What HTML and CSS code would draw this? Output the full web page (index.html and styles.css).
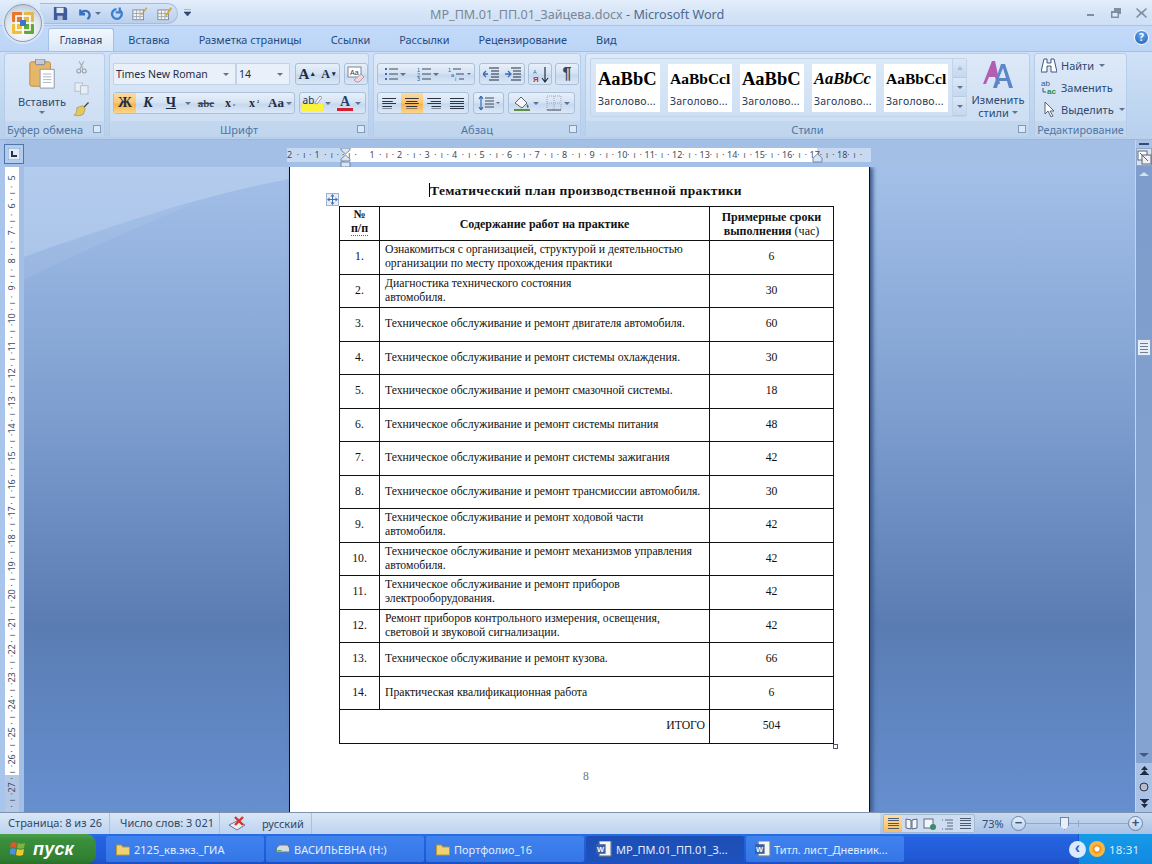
FILE: index.html
```html
<!DOCTYPE html>
<html lang="ru">
<head>
<meta charset="utf-8">
<title>Microsoft Word</title>
<link rel="stylesheet" href="styles.css">
</head>
<body>
<div class="app">
  <header class="titlebar">
    <div class="office-btn">
      <svg width="24" height="24" viewBox="0 0 24 24"><rect x="1" y="1" width="10" height="10" rx="1" fill="#e8762c"/><rect x="13" y="1" width="10" height="10" rx="1" fill="#e4b23a" opacity=".9"/><rect x="1" y="13" width="10" height="10" rx="1" fill="#f2c038"/><rect x="13" y="13" width="10" height="10" rx="1" fill="#5fa83c"/><rect x="5" y="5" width="14" height="14" fill="none" stroke="#fff" stroke-width="1.6"/><rect x="9" y="9" width="6" height="6" fill="#3b78c4"/></svg>
    </div>
    <div class="qat">
      <svg width="15" height="15" viewBox="0 0 17 17"><path d="M1 1h13l2 2v13H1z" fill="#3f5a9a"/><rect x="4" y="2" width="8" height="6" fill="#dfe8f6"/><rect x="5" y="11" width="6" height="5" fill="#a9bcdc"/></svg>
      <svg class="g8" width="14" height="13" viewBox="0 0 18 16"><path d="M3 3v6h6M3 9c3-6 11-6 12 1 0 2-1 4-3 5" fill="none" stroke="#3a6fc0" stroke-width="3"/></svg>
      <i class="arr"></i>
      <svg class="gap" width="13" height="14" viewBox="0 0 16 16"><path d="M13 4a6 6 0 1 1-5-2M12 0v6H7" fill="none" stroke="#3a7fd0" stroke-width="2.8"/></svg>
      <svg class="gap" width="16" height="15" viewBox="0 0 18 16"><rect x="1" y="4" width="12" height="11" fill="#f5f5ef" stroke="#7d8694"/><path d="M1 8h12M1 11.500h12M5 4v11M9 4v11" stroke="#9aa5b5"/><path d="M10 9 16 1l1 1-6 8z" fill="#c99a4a"/></svg>
      <svg class="gap" width="16" height="15" viewBox="0 0 18 16"><rect x="1" y="4" width="12" height="11" fill="#f5f5ef" stroke="#7d8694"/><path d="M1 8h12M1 11.500h12M5 4v11M9 4v11" stroke="#9aa5b5"/><path d="M9 10 15 1l2 1-6 9z" fill="#d8a844"/></svg>
    </div>
    <div class="qat-more">
      <svg width="7" height="8" viewBox="0 0 7 8"><path d="M0 0h7M0 3h7l-3.500 4z" fill="#33466b" stroke="#33466b" stroke-width=".6"/></svg>
    </div>
    <h1 class="doc-title">МР_ПМ.01_ПП.01_Зайцева.docx<span class="dash"> - </span><span class="appname">Microsoft Word</span></h1>
    <div class="winctl">
      <svg width="10" height="10" viewBox="0 0 10 10"><rect x="1" y="6" width="7" height="2" fill="#7f8ea3"/></svg>
      <svg width="10" height="10" viewBox="0 0 10 10"><path d="M3 0h7v6H8V3H3zM0 3h8v7H0z" fill="#7f8ea3"/><rect x="1.500" y="5" width="5" height="3.500" fill="#dde9f7"/></svg>
      <svg width="11" height="10" viewBox="0 0 11 10"><path d="M1 0 5.500 4 10 0l1 1-4 4 4 4-1 1-4.500-4L1 10 0 9l4-4-4-4z" fill="#7f8ea3"/></svg>
    </div>
  </header>

  <nav class="tabs">
    <span class="tab active">Главная</span>
    <span class="tab">Вставка</span>
    <span class="tab">Разметка страницы</span>
    <span class="tab">Ссылки</span>
    <span class="tab">Рассылки</span>
    <span class="tab">Рецензирование</span>
    <span class="tab">Вид</span>
    <span class="help">?</span>
  </nav>

  <section class="ribbon">
    <div class="group g-clip">
      <div class="g-body clip-body">
        <div class="paste">
          <svg width="28" height="30" viewBox="0 0 28 32"><rect x="1" y="3" width="22" height="26" rx="2" fill="#e6b66a" stroke="#b98a45"/><rect x="7" y="0" width="10" height="6" rx="1" fill="#c7ccd4" stroke="#7d8694"/><path d="M12 11h15v20H12z" fill="#fff" stroke="#8b95a3"/><path d="M15 16h9M15 19h9M15 22h9M15 25h9" stroke="#a9b2bf"/></svg>
          <span>Вставить</span>
          <i class="arr"></i>
        </div>
        <div class="clip-tools">
          <svg width="11" height="15" viewBox="0 0 14 16"><path d="M4 0l5 10M10 0 5 10" stroke="#a3abb5" stroke-width="1.400"/><circle cx="3.500" cy="12.500" r="2.500" fill="none" stroke="#98a1ac" stroke-width="1.400"/><circle cx="10.500" cy="12.500" r="2.500" fill="none" stroke="#98a1ac" stroke-width="1.400"/></svg>
          <svg width="15" height="13" viewBox="0 0 16 14"><rect x="1" y="1" width="8" height="9" fill="#e9eef5" stroke="#b3bccb"/><rect x="7" y="4" width="8" height="9" fill="#e9eef5" stroke="#b3bccb"/></svg>
          <svg width="15" height="15" viewBox="0 0 16 16"><path d="M10 5 15 0l1 1-5 5z" fill="#4a4a40"/><path d="M3 6 9 4l3 3-2 6c-3 2-8 2-10 1 3-2 3-4 3-8z" fill="#e3c860" stroke="#9b8335" stroke-width=".6"/></svg>
        </div>
      </div>
      <div class="g-label left">Буфер обмена<i class="launch"></i></div>
    </div>

    <div class="group g-font">
      <div class="g-body rows">
        <div class="row">
          <div class="combo c-font">Times New Roman<i class="arr"></i></div>
          <div class="combo c-size">14<i class="arr"></i></div>
          <div class="bgroup m5">
            <b class="btn w22 serif big">A<sup>▴</sup></b>
            <b class="btn w21 serif mid">A<sup>▾</sup></b>
          </div>
          <div class="bgroup m4">
            <span class="btn w22"><svg width="18" height="17" viewBox="0 0 18 17"><rect x="1" y="1" width="13" height="10" fill="#fff" stroke="#7d8694"/><text x="3" y="9" class="mini">Aa</text><path d="M7 14l7-6 3 3-5 5H9z" fill="#f0d6d8" stroke="#a8808a" stroke-width=".7"/></svg></span>
          </div>
        </div>
        <div class="row">
          <div class="bgroup">
            <b class="btn w22 on serif fs">Ж</b>
            <b class="btn w24 serif fs"><em>К</em></b>
            <b class="btn w22 serif fs"><u>Ч</u></b>
            <span class="btn w12"><i class="arr"></i></span>
            <span class="btn w24 serif strike">abc</span>
            <b class="btn w24 serif">x<sub>₂</sub></b>
            <b class="btn w24 serif">x<sup>²</sup></b>
            <span class="btn w28 serif aa"><b>Aa</b><i class="arr"></i></span>
          </div>
          <div class="bgroup m4">
            <span class="btn w33 hl"><span class="hl-t">ab<svg width="8" height="10" viewBox="0 0 11 13"><path d="M1 11 8 1l3 2-7 9z" fill="#fff" stroke="#6f7885"/></svg></span><i class="arr"></i></span>
            <span class="btn w32 fc"><b class="serif">A</b><i class="arr"></i></span>
          </div>
        </div>
      </div>
      <div class="g-label">Шрифт<i class="launch"></i></div>
    </div>

    <div class="group g-para">
      <div class="g-body rows">
        <div class="row">
          <div class="bgroup">
            <span class="btn w33"><svg width="14" height="14" viewBox="0 0 14 14"><path d="M5 2h9M5 7h9M5 12h9" stroke="#3d4a5c"/><path d="M1 1h2v2H1zM1 6h2v2H1zM1 11h2v2H1z" fill="#3b6cb0"/></svg><i class="arr"></i></span>
            <span class="btn w33"><svg width="14" height="14" viewBox="0 0 14 14"><path d="M5 2h9M5 7h9M5 12h9" stroke="#3d4a5c"/><text x="0" y="4.500" class="mini blue">1</text><text x="0" y="9.500" class="mini blue">2</text><text x="0" y="14" class="mini blue">3</text></svg><i class="arr"></i></span>
            <span class="btn w30"><svg width="18" height="14" viewBox="0 0 18 14"><path d="M6 2h8M9 7h8M12 12h5" stroke="#3d4a5c"/><text x="1" y="4.500" class="mini blue">1</text><text x="4" y="9.500" class="mini blue">a</text><text x="8" y="14" class="mini blue">i</text></svg><i class="arr small"></i></span>
          </div>
          <div class="bgroup m4">
            <span class="btn w22"><svg width="16" height="14" viewBox="0 0 16 14"><path d="M6 1h10M8 4h8M8 7h8M8 10h8M6 13h10" stroke="#26303f" stroke-width="1.200"/><path d="M5 7H0M3 4 0 7l3 3" fill="none" stroke="#3b6cb0" stroke-width="1.300"/></svg></span>
            <span class="btn w22"><svg width="16" height="14" viewBox="0 0 16 14"><path d="M6 1h10M8 4h8M8 7h8M8 10h8M6 13h10" stroke="#26303f" stroke-width="1.200"/><path d="M0 7h5M3 4l3 3-3 3" fill="none" stroke="#3b6cb0" stroke-width="1.300"/></svg></span>
          </div>
          <div class="bgroup m3">
            <span class="btn w22"><svg width="17" height="17" viewBox="0 0 17 17"><text x="1" y="7.500" class="mini blue">А</text><text x="1" y="16" class="mini red">Я</text><path d="M13 1v14M10 12l3 4 3-4" fill="none" stroke="#26303f" stroke-width="1.200"/></svg></span>
          </div>
          <div class="bgroup m3">
            <span class="btn w22 pil">¶</span>
          </div>
        </div>
        <div class="row">
          <div class="bgroup">
            <span class="btn w23"><i class="al al-l"></i></span>
            <span class="btn w23 on"><i class="al al-c"></i></span>
            <span class="btn w23"><i class="al al-r"></i></span>
            <span class="btn w23"><i class="al"></i></span>
          </div>
          <div class="bgroup m4">
            <span class="btn w29"><svg width="16" height="14" viewBox="0 0 16 14"><path d="M7 2h9M7 5h9M7 8h9M7 11h9" stroke="#3d4a5c"/><path d="M3 0v14M1 3l2-3 2 3M1 11l2 3 2-3" fill="none" stroke="#3b6cb0" stroke-width="1.200"/></svg><i class="arr small"></i></span>
          </div>
          <div class="bgroup m4">
            <span class="btn w33"><svg width="18" height="16" viewBox="0 0 18 16"><path d="M2 8 8 2l6 6-5 5z" fill="#f5f5f5" stroke="#5a6472"/><path d="M14 9c2 2 2 3 1 4-1 0-2-2-1-4z" fill="#3b6cb0"/><rect x="1" y="14" width="16" height="2" fill="#5e8e3e"/></svg><i class="arr"></i></span>
            <span class="btn w32"><svg width="16" height="16" viewBox="0 0 16 16"><rect x="1" y="1" width="14" height="14" fill="none" stroke="#9aa5b5" stroke-dasharray="1 1"/><path d="M8 1v14M1 8h14" stroke="#9aa5b5" stroke-dasharray="1 1"/><path d="M1 15h14" stroke="#4a5566"/></svg><i class="arr"></i></span>
          </div>
        </div>
      </div>
      <div class="g-label">Абзац<i class="launch"></i></div>
    </div>

    <div class="group g-styles">
      <div class="g-body styles-body">
        <div class="gallery">
          <div class="card"><b class="s1">AaBbC</b><span>Заголово...</span></div>
          <div class="card"><b class="s2">AaBbCcl</b><span>Заголово...</span></div>
          <div class="card"><b class="s1">AaBbC</b><span>Заголово...</span></div>
          <div class="card"><b class="s3">AaBbCc</b><span>Заголово...</span></div>
          <div class="card"><b class="s2">AaBbCcl</b><span>Заголово...</span></div>
          <div class="gal-scroll">
            <span class="off"><i class="arr up"></i></span>
            <span><i class="arr"></i></span>
            <span><i class="arr"></i></span>
          </div>
        </div>
        <div class="change">
          <svg width="31" height="29" viewBox="0 0 31 29"><path d="M0 24 9 1h3l5 23h-3l-2-7H6l-3 7z" fill="#b55db0"/><path d="M10 28 18 4h4l8 24h-4l-2-7h-8l-2 7z" fill="#5b87c8"/><path d="M16 18h7l-3-10z" fill="#dbe7f6"/></svg>
          <span>Изменить</span>
          <span>стили<i class="arr"></i></span>
        </div>
      </div>
      <div class="g-label">Стили<i class="launch"></i></div>
    </div>

    <div class="group g-edit">
      <div class="g-body edit-body">
        <div class="edit-row">
          <svg width="16" height="15" viewBox="0 0 16 15"><path d="M3 1h3v4h4V1h3l3 13h-6V8H6v6H0z" fill="#fff" stroke="#3c5780"/></svg>
          <span>Найти</span><i class="arr"></i>
        </div>
        <div class="edit-row">
          <svg width="16" height="15" viewBox="0 0 16 15"><text x="0" y="6" class="mini dark">ab</text><text x="6" y="14" class="mini green">ac</text><path d="M2 8v4h3" fill="none" stroke="#3c5780"/></svg>
          <span>Заменить</span>
        </div>
        <div class="edit-row">
          <svg width="16" height="15" viewBox="0 0 16 15"><path d="M4 0v12l3-3 3 6 2-1-3-5h4z" fill="#fff" stroke="#5a6472"/></svg>
          <span>Выделить</span><i class="arr"></i>
        </div>
      </div>
      <div class="g-label">Редактирование</div>
    </div>
  </section>

  <main class="workspace">
    <aside class="vside">
      <div class="tabstop"><svg width="12" height="12" viewBox="0 0 12 12"><rect width="12" height="12" fill="#e2ecf8" stroke="#7f9ac0"/><path d="M4 3v5h5" fill="none" stroke="#23354f" stroke-width="2"/></svg></div>
      <div class="vruler">
        <span>5</span><span>6</span><span>7</span><span>8</span><span>9</span><span>10</span><span>11</span><span>12</span><span>13</span><span>14</span><span>15</span><span>16</span><span>17</span><span>18</span><span>19</span><span>20</span><span>21</span><span>22</span><span>23</span><span>24</span><span>25</span><span>26</span><span>27</span>
      </div>
    </aside>

    <div class="center">
      <div class="hstrip">
        <div class="hruler">
          <span>2</span><span>1</span><span></span><span>1</span><span>2</span><span>3</span><span>4</span><span>5</span><span>6</span><span>7</span><span>8</span><span>9</span><span>10</span><span>11</span><span>12</span><span>13</span><span>14</span><span>15</span><span>16</span><span>17</span><span>18</span>
          <svg class="indent-l" width="11" height="19" viewBox="0 0 11 19"><path d="M1 0h9v2L5.500 6 1 2zM5.500 7 10 11v2H1v-2zM1 14h9v5H1z" fill="#d9e5f4" stroke="#5d7698" stroke-width=".8"/></svg>
          <svg class="indent-r" width="11" height="10" viewBox="0 0 11 10"><path d="M5.500 1 10 5v4H1V5z" fill="#d9e5f4" stroke="#5d7698" stroke-width=".8"/></svg>
        </div>
      </div>
      <div class="canvas">
        <article class="page">
          <i class="move"><svg width="11" height="11" viewBox="0 0 11 11"><path d="M5.500 0 7.500 2.500h-1.500v2.500h2.500V3.500L11 5.500 8.500 7.500V6H6v2.500h1.500L5.500 11 3.500 8.500H5V6H2.500v1.500L0 5.500 2.500 3.500V5H5V2.500H3.500z" fill="#3f6fb0"/></svg></i>
          <h2 class="doc-h"><span class="caret"></span>Тематический план производственной практики</h2>
          <div class="table-wrap">
          <table class="plan">
            <colgroup><col class="c1"><col class="c2"><col class="c3"></colgroup>
            <tr class="head"><th class="num">№<br><span class="squig">п/п</span></th><th>Содержание работ на практике</th><th>Примерные сроки<br>выполнения <span class="norm">(час)</span></th></tr>
            <tr><td class="n">1.</td><td>Ознакомиться с организацией, структурой и деятельностью<br>организации по месту прохождения практики</td><td class="n">6</td></tr>
            <tr><td class="n">2.</td><td>Диагностика технического состояния<br>автомобиля.</td><td class="n">30</td></tr>
            <tr><td class="n">3.</td><td>Техническое обслуживание и ремонт двигателя автомобиля.</td><td class="n">60</td></tr>
            <tr><td class="n">4.</td><td>Техническое обслуживание и ремонт системы охлаждения.</td><td class="n">30</td></tr>
            <tr><td class="n">5.</td><td>Техническое обслуживание и ремонт смазочной системы.</td><td class="n">18</td></tr>
            <tr><td class="n">6.</td><td>Техническое обслуживание и ремонт системы питания</td><td class="n">48</td></tr>
            <tr><td class="n">7.</td><td>Техническое обслуживание и ремонт системы зажигания</td><td class="n">42</td></tr>
            <tr><td class="n">8.</td><td>Техническое обслуживание и ремонт трансмиссии автомобиля.</td><td class="n">30</td></tr>
            <tr><td class="n">9.</td><td>Техническое обслуживание и ремонт ходовой части<br>автомобиля.</td><td class="n">42</td></tr>
            <tr><td class="n">10.</td><td>Техническое обслуживание и ремонт механизмов управления<br>автомобиля.</td><td class="n">42</td></tr>
            <tr><td class="n">11.</td><td>Техническое обслуживание и ремонт приборов<br>электрооборудования.</td><td class="n">42</td></tr>
            <tr><td class="n">12.</td><td>Ремонт приборов контрольного измерения, освещения,<br>световой и звуковой сигнализации.</td><td class="n">42</td></tr>
            <tr><td class="n">13.</td><td>Техническое обслуживание и ремонт кузова.</td><td class="n">66</td></tr>
            <tr><td class="n">14.</td><td>Практическая квалификационная работа</td><td class="n">6</td></tr>
            <tr><td colspan="2" class="total">ИТОГО</td><td class="n">504</td></tr>
          </table>
          <i class="resize"></i>
          </div>
          <div class="pagenum">8</div>
        </article>
      </div>
    </div>

    <aside class="vscroll">
      <i class="split"></i>
      <div class="vrbtn"><svg width="15" height="15" viewBox="0 0 15 15"><rect x="1" y="1" width="9" height="9" fill="#fff" stroke="#5a6472"/><rect x="5" y="5" width="9" height="9" fill="#eef2f8" stroke="#5a6472"/><path d="M3 3l8 8" stroke="#5a6472"/></svg></div>
      <div class="track">
        <i class="tri up"></i>
        <div class="thumb"><i></i><i></i><i></i><i></i></div>
        <i class="tri down"></i>
      </div>
      <div class="browse">
        <svg width="9" height="9" viewBox="0 0 9 9"><path d="M4.500 0 8 4H1zM4.500 4 8 8H1zM0 8h9v1H0z" fill="#1d2a40"/></svg>
        <svg width="10" height="10" viewBox="0 0 10 10"><circle cx="5" cy="5" r="4" fill="#b7bcc8" stroke="#2a3346"/></svg>
        <svg width="9" height="9" viewBox="0 0 9 9"><path d="M0 0h9v1H0zM1 1h7L4.500 5zM1 5h7L4.500 9z" fill="#1d2a40"/></svg>
      </div>
    </aside>
  </main>

  <footer class="status">
    <span class="st st-page">Страница: 8 из 26</span>
    <span class="st st-words">Число слов: 3 021</span>
    <span class="st st-lang"><svg width="18" height="16" viewBox="0 0 18 16"><path d="M1 9l8-4 8 4-8 5z" fill="#e8edf5" stroke="#6b7a90"/><path d="M7 1l8 8M15 1 7 9" stroke="#d8332c" stroke-width="2.400"/></svg>русский</span>
    <div class="st-right">
      <div class="views">
        <span class="view on"><i class="vl"></i></span>
        <span class="view"><svg width="13" height="12" viewBox="0 0 13 12"><path d="M1 1l5 1v9l-5-1zM12 1 7 2v9l5-1z" fill="#f2f5fa" stroke="#5a6a80"/></svg></span>
        <span class="view"><svg width="13" height="12" viewBox="0 0 13 12"><rect x="1" y="1" width="9" height="9" fill="#f2f5fa" stroke="#5a6a80"/><circle cx="10" cy="9" r="3" fill="#3f8a6c"/></svg></span>
        <span class="view"><svg width="13" height="12" viewBox="0 0 13 12"><path d="M4 2h8M6 5h6M6 8h6M4 11h8" stroke="#5a6a80"/><path d="M1 2h1M1 11h1" stroke="#5a6a80"/></svg></span>
        <span class="view"><i class="vl"></i></span>
      </div>
      <span class="zoom-val">73%</span>
      <span class="zbtn">−</span>
      <div class="slider"><i class="mid"></i><i class="knob"></i></div>
      <span class="zbtn">+</span>
    </div>
  </footer>

  <footer class="taskbar">
    <div class="start">
      <svg width="17" height="16" viewBox="0 0 17 16"><path d="M1 2c2-1 4-1 6 0l-1 5c-2-1-4-1-6 0z" fill="#e2562a"/><path d="M8 2c2 1 5 1 7 0l-1 5c-2 1-5 1-7 0z" fill="#7cb53c"/><path d="M0 8c2-1 4-1 6 0l-1 6c-2-1-4-1-6 0z" fill="#4d8fdc"/><path d="M7 8c2 1 5 1 7 0l-1 6c-2 1-5 1-7 0z" fill="#f2c531"/></svg>
      <em>пуск</em>
    </div>
    <div class="tb">
      <svg width="16" height="13" viewBox="0 0 15 13"><path d="M1 2h5l1 2h7v8H1z" fill="#f0d272" stroke="#b8963c"/></svg>
      <span>2125_кв.экз._ГИА</span>
    </div>
    <div class="tb">
      <svg width="16" height="13" viewBox="0 0 15 13"><path d="M1 5 4 2h8l2 3v4H1z" fill="#d6dbe2" stroke="#6f7885"/><rect x="2" y="7" width="4" height="1" fill="#39b54a"/></svg>
      <span>ВАСИЛЬЕВНА (H:)</span>
    </div>
    <div class="tb">
      <svg width="16" height="13" viewBox="0 0 15 13"><path d="M1 2h5l1 2h7v8H1z" fill="#f0d272" stroke="#b8963c"/></svg>
      <span>Портфолио_16</span>
    </div>
    <div class="tb act">
      <svg width="16" height="16" viewBox="0 0 15 15"><rect x="3" y="0" width="11" height="14" fill="#f7f7f2" stroke="#7d8694"/><rect x="0" y="3" width="9" height="9" fill="#3a5fa8"/><text x="1" y="10.500" class="mini white">W</text></svg>
      <span>МР_ПМ.01_ПП.01_З...</span>
    </div>
    <div class="tb">
      <svg width="16" height="16" viewBox="0 0 15 15"><rect x="3" y="0" width="11" height="14" fill="#f7f7f2" stroke="#7d8694"/><rect x="0" y="3" width="9" height="9" fill="#3a5fa8"/><text x="1" y="10.500" class="mini white">W</text></svg>
      <span>Титл. лист_Дневник...</span>
    </div>
    <div class="tray">
      <span class="tray-arrow">‹</span>
      <span class="tray-app"></span>
      <span class="clock">18:31</span>
    </div>
  </footer>
</div>
</body>
</html>
```
FILE: styles.css
```css
* { box-sizing: border-box; }
html, body { margin: 0; padding: 0; }
body { font-family: "Noto Sans", "Open Sans", sans-serif; font-size: 11px; color: #21406e; }
i { font-style: normal; }
svg { display: block; flex: none; }
.app { width: 1152px; height: 864px; display: flex; flex-direction: column; overflow: hidden; position: relative; background: #bcd5f3; }

.mini { font: 7px "Liberation Sans", sans-serif; fill: #333; }
.mini.blue { fill: #2f62a8; font-size: 5.500px; }
.mini.red { fill: #b23a3a; font-size: 8px; font-weight: bold; }
.mini.dark { fill: #3c5780; font-size: 8px; }
.mini.green { fill: #2b8a3e; font-size: 8px; font-weight: bold; }
.mini.white { fill: #fff; font-weight: bold; }

.arr { display: inline-block; width: 0; height: 0; border: 3px solid transparent; border-top: 3px solid #5f7392; border-bottom: 0; flex: none; }
.arr.small { border-width: 2.500px; border-bottom: 0; }
.arr.up { border-top: 0; border-bottom: 4px solid #a9bcd6; }

/* Title bar */
.titlebar { height: 26px; flex: none; display: flex; align-items: center; padding-left: 40px; background: linear-gradient(#e4eefb, #d3e3f7 60%, #cfe0f6); border-bottom: 1px solid #a9c5e8; position: relative; }
.office-btn { position: absolute; left: 4px; top: 4px; width: 38px; height: 38px; border-radius: 50%; z-index: 3; display: flex; align-items: center; justify-content: center; background: radial-gradient(circle at 50% 70%, #fff, #dfe6ee 55%, #aab8c8); border: 1px solid #8c9db3; box-shadow: 0 0 0 2px #d7e5f7; }
.qat { width: 138px; height: 21px; display: flex; align-items: center; padding-left: 13px; border-radius: 0 11px 11px 0; background: linear-gradient(#d5e3f6, #b9d0ee); border: 1px solid #a4bddd; border-left: 0; margin-top: 2px; gap: 3px; }
.qat .g8 { margin-left: 7px; }
.qat .gap { margin-left: 6px; }
.qat-more { margin-left: 6px; }
.doc-title { position: absolute; left: 430px; top: 4px; margin: 0; font-size: 12.600px; line-height: 21px; font-weight: 400; color: #7b8796; white-space: nowrap; }
.appname { color: #4d6a8f; }
.dash { color: #4d6a8f; }
.winctl { margin-left: auto; display: flex; gap: 15px; padding-right: 5px; align-items: center; }

/* Tabs */
.tabs { height: 25px; flex: none; display: flex; align-items: flex-end; padding-left: 48px; background: linear-gradient(#c3dafa, #bcd5f6); position: relative; }
.tab { height: 23px; padding: 0 14.500px; line-height: 24px; font-size: 10.900px; color: #1f4a80; white-space: nowrap; }
.tab.active { background: linear-gradient(#f2f7fd, #dbe8f8); border: 1px solid #a5c0e0; border-bottom: 0; border-radius: 3px 3px 0 0; padding: 0 10.500px; line-height: 22px; color: #1e3f6d; }
.help { position: absolute; left: 1134px; top: 4px; width: 15px; height: 15px; border-radius: 50%; background: radial-gradient(circle at 50% 30%, #6aa7ea, #1e5db4); border: 1px solid #fff; color: #fff; font-weight: bold; font-size: 10px; line-height: 13px; text-align: center; }

/* Ribbon */
.ribbon { height: 89px; flex: none; display: flex; gap: 4px; padding: 1px 23px 1px 4px; background: linear-gradient(#cfe1f7, #bcd4ef 75%, #b8d0ec); border-top: 1px solid #a3c0e4; border-bottom: 1px solid #9fb7d6; }
.group { display: flex; flex-direction: column; border: 1px solid #b5cde9; border-radius: 3px; background: linear-gradient(#dde9f8, #cadcf2); overflow: hidden; }
.g-clip { width: 101px; }
.g-font { width: 260px; }
.g-para { width: 208px; }
.g-styles { width: 445px; }
.g-edit { width: 93px; }
.g-body { flex: 1; min-height: 0; }
.g-label { height: 16px; flex: none; position: relative; text-align: center; line-height: 17px; font-size: 11px; color: #4f75a3; background: linear-gradient(#c3d8ef, #bfd5ee); white-space: nowrap; }
.g-label.left { text-align: left; padding-left: 2px; }
.launch { position: absolute; right: 3px; top: 4px; width: 8px; height: 8px; border: 1px solid #7f9bbe; background: #dce8f6; }

.clip-body { display: flex; padding: 5px 0 0 7px; }
.paste { width: 60px; display: flex; flex-direction: column; align-items: center; gap: 2px; color: #2b4a75; }
.paste span { margin-top: 4px; line-height: 14px; }
.clip-tools { display: flex; flex-direction: column; gap: 7px; align-items: center; width: 18px; padding-top: 1px; }

.rows { display: flex; flex-direction: column; gap: 7px; padding: 9px 0 0 3px; }
.row { display: flex; height: 22px; }
.bgroup { display: flex; height: 22px; border: 1px solid #a9bfda; border-radius: 3px; background: linear-gradient(#e8f0fa, #d3e2f4 50%, #c6d8ee 55%, #dbe7f6); flex: none; }
.m5 { margin-left: 5px; }
.m4 { margin-left: 4px; }
.m3 { margin-left: 3px; }
.btn { height: 20px; display: flex; align-items: center; justify-content: center; gap: 2px; color: #1c2c44; font-size: 12px; font-weight: 400; flex: none; }
.btn em { font-style: italic; }
.btn.on { background: linear-gradient(#fbdca0, #f9c66e 50%, #f7b24a 55%, #fbd58b); }
b.btn { font-weight: 700; }
.serif { font-family: "Liberation Serif", serif; }
.fs { font-size: 14px; }
.w12 { width: 12px; } .w21 { width: 21px; } .w22 { width: 22px; } .w23 { width: 22.500px; } .w24 { width: 24px; }
.w28 { width: 28px; } .w29 { width: 29px; } .w30 { width: 30px; } .w32 { width: 32px; } .w33 { width: 33px; }
.btn sup, .btn sub { font-size: 7px; line-height: 0; }
.big { font-size: 15px; } .mid { font-size: 12px; }
.strike { text-decoration: line-through; font-weight: 700; color: #39475a; font-size: 11px; }
.aa { font-size: 13px; }
.pil { font-size: 16px; font-family: "Liberation Sans", sans-serif; font-weight: 700; color: #38465a; }
.combo { height: 22px; display: flex; align-items: center; justify-content: space-between; padding: 0 6px 0 2px; background: #e9f0fa; border: 1px solid #c2d3e8; font-size: 10.500px; color: #1d2c40; white-space: nowrap; flex: none; }
.c-font { width: 123px; }
.c-size { width: 54px; }
.hl { gap: 2px; }
.hl-t { display: flex; align-items: flex-start; height: 16px; font-size: 10px; line-height: 10px; padding: 0 1px; color: #23324a; background: linear-gradient(transparent 9px, #fcf23c 9px); }
.fc b { font-size: 14px; line-height: 13px; color: #27416e; border-bottom: 3px solid #d31f2e; padding: 0 3px; }

.al { display: block; width: 14px; height: 11px; background: repeating-linear-gradient(#2c3543 0 1px, transparent 1px 2.500px); }
.al-l { clip-path: polygon(0 0,100% 0,100% 22%,75% 22%,75% 44%,100% 44%,100% 66%,70% 66%,70% 100%,0 100%); }
.al-c { clip-path: polygon(0 0,100% 0,100% 22%,90% 22%,90% 44%,100% 44%,100% 66%,90% 66%,90% 100%,10% 100%,10% 66%,0 66%,0 44%,10% 44%,10% 22%,0 22%); }
.al-r { clip-path: polygon(0 0,100% 0,100% 100%,30% 100%,30% 66%,0 66%,0 44%,25% 44%,25% 22%,0 22%); }

.styles-body { display: flex; padding: 4px 0 0 4px; }
.gallery { width: 377px; height: 59px; display: flex; gap: 8px; padding: 5px 0 0 5px; border: 1px solid #c2d4ea; border-radius: 2px; position: relative; }
.card { width: 64px; height: 48px; background: #fff; display: flex; flex-direction: column; align-items: flex-start; padding: 3px 0 0 2px; overflow: hidden; white-space: nowrap; flex: none; }
.card b { font-family: "Liberation Serif", serif; color: #000; height: 23px; line-height: 24px; margin-bottom: 5px; }
.s1 { font-size: 18.500px; }
.s2 { font-size: 15.500px; }
.s3 { font-size: 16.500px; font-style: italic; }
.card span { font-size: 10.500px; line-height: 13px; color: #243a5a; letter-spacing: .200px; }
.gal-scroll { position: absolute; right: 0; top: 0; width: 14px; height: 57px; display: flex; flex-direction: column; border-left: 1px solid #c2d4ea; }
.gal-scroll span { flex: 1; display: flex; align-items: center; justify-content: center; background: linear-gradient(#dbe7f6, #c5d8ef); border-bottom: 1px solid #b7cbe3; }
.change { flex: 1; display: flex; flex-direction: column; align-items: center; color: #2b4a75; padding-top: 2px; line-height: 13px; }
.change svg { margin-bottom: 4px; }
.change span { display: flex; align-items: center; gap: 3px; }

.edit-body { display: flex; flex-direction: column; gap: 4px; padding: 2px 0 0 6px; }
.edit-row { height: 18px; display: flex; align-items: center; gap: 4px; color: #2b4a75; font-size: 11px; }
.edit-row .arr { margin-left: 1px; }
.g-edit .g-label { font-size: 10.800px; }

/* Workspace */
.workspace { flex: 1; min-height: 0; display: flex; background: #a3bfe6; }
.vside { width: 24px; flex: none; display: flex; flex-direction: column; background: linear-gradient(90deg, #a9c5ec 5px, #a3bfe6 5px); }
.tabstop { width: 20px; height: 20px; margin: 4px 0 3px 4px; flex: none; display: flex; align-items: center; justify-content: center; background: #b3cbec; border: 1px solid #4f75ad; }
.vruler { flex: 1; margin-left: 5px; width: 14px; overflow: hidden; padding-top: 8px; background: linear-gradient(#fff 608px, #b5c9e6 608px); display: flex; flex-direction: column; align-items: center; font: 9px "Noto Sans", sans-serif; color: #3c4c60; }
.vruler span { height: 27.600px; flex: none; writing-mode: vertical-rl; transform: rotate(180deg); display: flex; align-items: center; justify-content: space-between; line-height: 14px; }
.vruler span::before { content: "·  ı  ·"; font-size: 8px; white-space: pre; margin-top: 2px; }

.center { flex: 1; min-width: 0; display: flex; flex-direction: column; }
.hstrip { height: 27px; flex: none; padding: 8px 0 0 263px; background: #a3bfe6; }
.hruler { width: 584px; height: 14px; position: relative; display: flex; font: 9px/14px "Noto Sans", sans-serif; color: #3c4c60; background: linear-gradient(90deg, #c8daf1 58px, #fff 58px, #fff 530px, #c8daf1 530px); }
.hruler span { width: 27.500px; flex: none; display: flex; justify-content: space-between; padding-right: 3px; white-space: pre; }
.hruler span::after { content: "·  ı  ·"; font-size: 8px; }
.indent-l { position: absolute; left: 53px; top: 0; }
.indent-r { position: absolute; left: 525px; top: 5px; }

.canvas { flex: 1; min-height: 0; overflow: hidden; padding-left: 265px; position: relative; background: linear-gradient(#a3c0e9, #7e9fcf 37%, #5a7cb3 71%, #668fcf); }
.canvas::before { content: ""; position: absolute; left: 0; top: 0; width: 265px; height: 120px; background: rgba(200, 220, 245, .45); clip-path: path("M0 0H265V12C170 30 80 62 0 90Z"); }
.canvas::after { content: ""; position: absolute; left: 0; top: 0; width: 265px; height: 120px; background: rgba(200, 220, 245, .14); clip-path: path("M0 90C80 62 130 44 170 36C110 62 50 88 0 113Z"); }
.page { width: 581px; height: 646px; background: #fff; border-left: 1px solid #111; border-right: 1px solid #111; box-shadow: 3px 0 4px #3d5c8a; position: relative; z-index: 1; padding: 16px 0 0 49px; font-family: "Liberation Serif", serif; color: #111; }
.doc-h { margin: 0 0 8px -49px; height: 15px; text-align: center; font-size: 13.500px; line-height: 15px; font-weight: 700; letter-spacing: .300px; padding-left: 12px; white-space: nowrap; }
.caret { display: inline-block; width: 1px; height: 14px; background: #000; vertical-align: -2px; }
.move { position: absolute; left: 36px; top: 26px; width: 13px; height: 13px; display: flex; align-items: center; justify-content: center; background: #e8eef7; border: 1px solid #9fb2cc; }
.table-wrap { width: 494px; position: relative; }
.plan { width: 494px; table-layout: fixed; border-collapse: collapse; font-size: 11.700px; line-height: 14px; }
.c1 { width: 40px; } .c2 { width: 330px; } .c3 { width: 124px; }
.plan th, .plan td { border: 1px solid #111; padding: 0 0 0 5px; vertical-align: middle; font-weight: 400; white-space: nowrap; }
.plan tr { height: 33.500px; }
.plan th { font-weight: 700; text-align: center; padding: 0; font-size: 12px; }
.plan th.num { padding-bottom: 5px; }
.plan .n { text-align: center; padding: 0; }
.plan .total { text-align: right; padding: 0 4px 0 0; }
.norm { font-weight: 400; }
.squig { border-bottom: 1px dotted #c33; }
.resize { position: absolute; right: -5px; bottom: -5px; width: 5px; height: 5px; background: #fff; border: 1px solid #556; }
.pagenum { width: 494px; margin-top: 26px; text-align: center; font-size: 11.700px; color: #777; }

.vscroll { width: 17px; flex: none; display: flex; flex-direction: column; align-items: center; background: #a9c2e5; border-left: 1px solid #c3d5ee; }
.split { width: 10px; height: 2px; background: #2f4d7f; margin: 3px 0 3px; flex: none; }
.vrbtn { width: 16px; height: 18px; flex: none; display: flex; align-items: center; justify-content: center; background: #d8e3f2; border: 1px solid #8ea6c8; }
.track { width: 100%; height: 597px; flex: none; background: linear-gradient(#7e9dcc, #84a3d0); display: flex; flex-direction: column; align-items: center; padding: 6px 0; position: relative; }
.tri { width: 0; height: 0; border: 5px solid transparent; flex: none; }
.tri.up { border-top: 0; border-bottom: 4px solid #d3e0f1; }
.tri.down { border-bottom: 0; border-top: 4px solid #3f5a86; margin-top: auto; }
.thumb { position: absolute; left: 1px; top: 173px; width: 14px; height: 17px; display: flex; flex-direction: column; justify-content: center; align-items: center; gap: 2px; background: #e6edf7; border: 1px solid #8aa3c6; }
.thumb i { width: 8px; height: 1px; background: #6f7f96; }
.browse { flex: 1; display: flex; flex-direction: column; align-items: center; gap: 7px; padding-top: 3px; }

/* Status */
.status { height: 22px; flex: none; display: flex; align-items: center; background: linear-gradient(#d9e6f7, #bdd3ef); border-top: 1px solid #7f93ad; font-size: 11px; color: #2f4763; }
.st { height: 21px; line-height: 20px; border-right: 1px solid #aebfd6; white-space: nowrap; }
.st-page { width: 110px; padding-left: 8px; }
.st-words { width: 110px; padding-left: 10px; }
.st-lang { width: 92px; display: flex; align-items: center; padding-left: 8px; gap: 16px; }
.st-right { margin-left: auto; height: 21px; width: 272px; display: flex; align-items: center; background: linear-gradient(#c8d9ef, #a8c3e6); padding-left: 3px; }
.views { display: flex; height: 19px; border: 1px solid #a3b8d3; border-radius: 2px; background: #cddcf0; }
.view { width: 18px; height: 17px; display: flex; align-items: center; justify-content: center; }
.view.on { background: linear-gradient(#fcdfa6, #f7bd62); }
.vl { display: block; width: 11px; height: 11px; background: repeating-linear-gradient(#4d5b70 0 1px, transparent 1px 2.500px); }
.zoom-val { margin-left: 7px; width: 29px; color: #2c4f80; font-size: 11px; }
.zbtn { width: 15px; height: 15px; flex: none; border-radius: 50%; background: linear-gradient(#e6eef9, #bcd0ea); border: 1px solid #6b85a8; font: 700 13px/12px "Liberation Sans", sans-serif; text-align: center; color: #38557f; }
.slider { width: 102px; height: 15px; position: relative; flex: none; background: linear-gradient(transparent 7px, #8ea9cc 7px, #8ea9cc 8px, transparent 8px); }
.slider .mid { position: absolute; left: 52px; top: 4px; width: 1px; height: 7px; background: #8ea9cc; }
.slider .knob { position: absolute; left: 34px; top: 1px; width: 9px; height: 13px; background: #e8eff8; border: 1px solid #6b85a8; clip-path: polygon(0 0,100% 0,100% 65%,50% 100%,0 65%); }

/* Taskbar */
.taskbar { height: 30px; flex: none; display: flex; align-items: center; gap: 2px; background: linear-gradient(#2a6ee8, #2563df 12%, #2159d6 80%, #1c4fc0); color: #e8f0ff; }
.start { width: 96px; height: 30px; margin-right: 8px; flex: none; display: flex; align-items: center; gap: 6px; padding-left: 10px; background: linear-gradient(#4aa14a, #3b8f3c 20%, #2f7f31 85%, #2a6e2c); border-radius: 0 10px 10px 0; color: #fff; font-family: "Liberation Sans", sans-serif; }
.start em { font-size: 18px; font-weight: 700; font-style: italic; letter-spacing: .200px; }
.tb { width: 158px; height: 26px; flex: none; display: flex; align-items: center; gap: 3px; padding-left: 9px; background: linear-gradient(#3f83ee, #3576e6); border-radius: 2px; white-space: nowrap; font-size: 11px; color: #e3edff; }
.tb.act { background: linear-gradient(#1c4fb6, #1e52ba); padding-left: 10px; gap: 4px; }
.tray { margin-left: auto; width: 74px; height: 30px; flex: none; display: flex; align-items: center; padding-left: 30px; background: linear-gradient(#169ae8, #1189e0); border-left: 1px solid #0c5fc2; position: relative; }
.tray-arrow { position: absolute; left: -10px; top: 7px; width: 17px; height: 17px; border-radius: 50%; background: #dbeafc; color: #2a64c4; font: 700 16px/13px "Liberation Sans", sans-serif; text-align: center; }
.tray-app { position: absolute; left: 10px; top: 7px; width: 16px; height: 16px; border-radius: 50%; background: radial-gradient(circle, #fff 0 2px, #f2931d 3px 4px, #f5b844 5px); }
.clock { font-size: 11.500px; color: #dcecff; letter-spacing: .200px; }
```
